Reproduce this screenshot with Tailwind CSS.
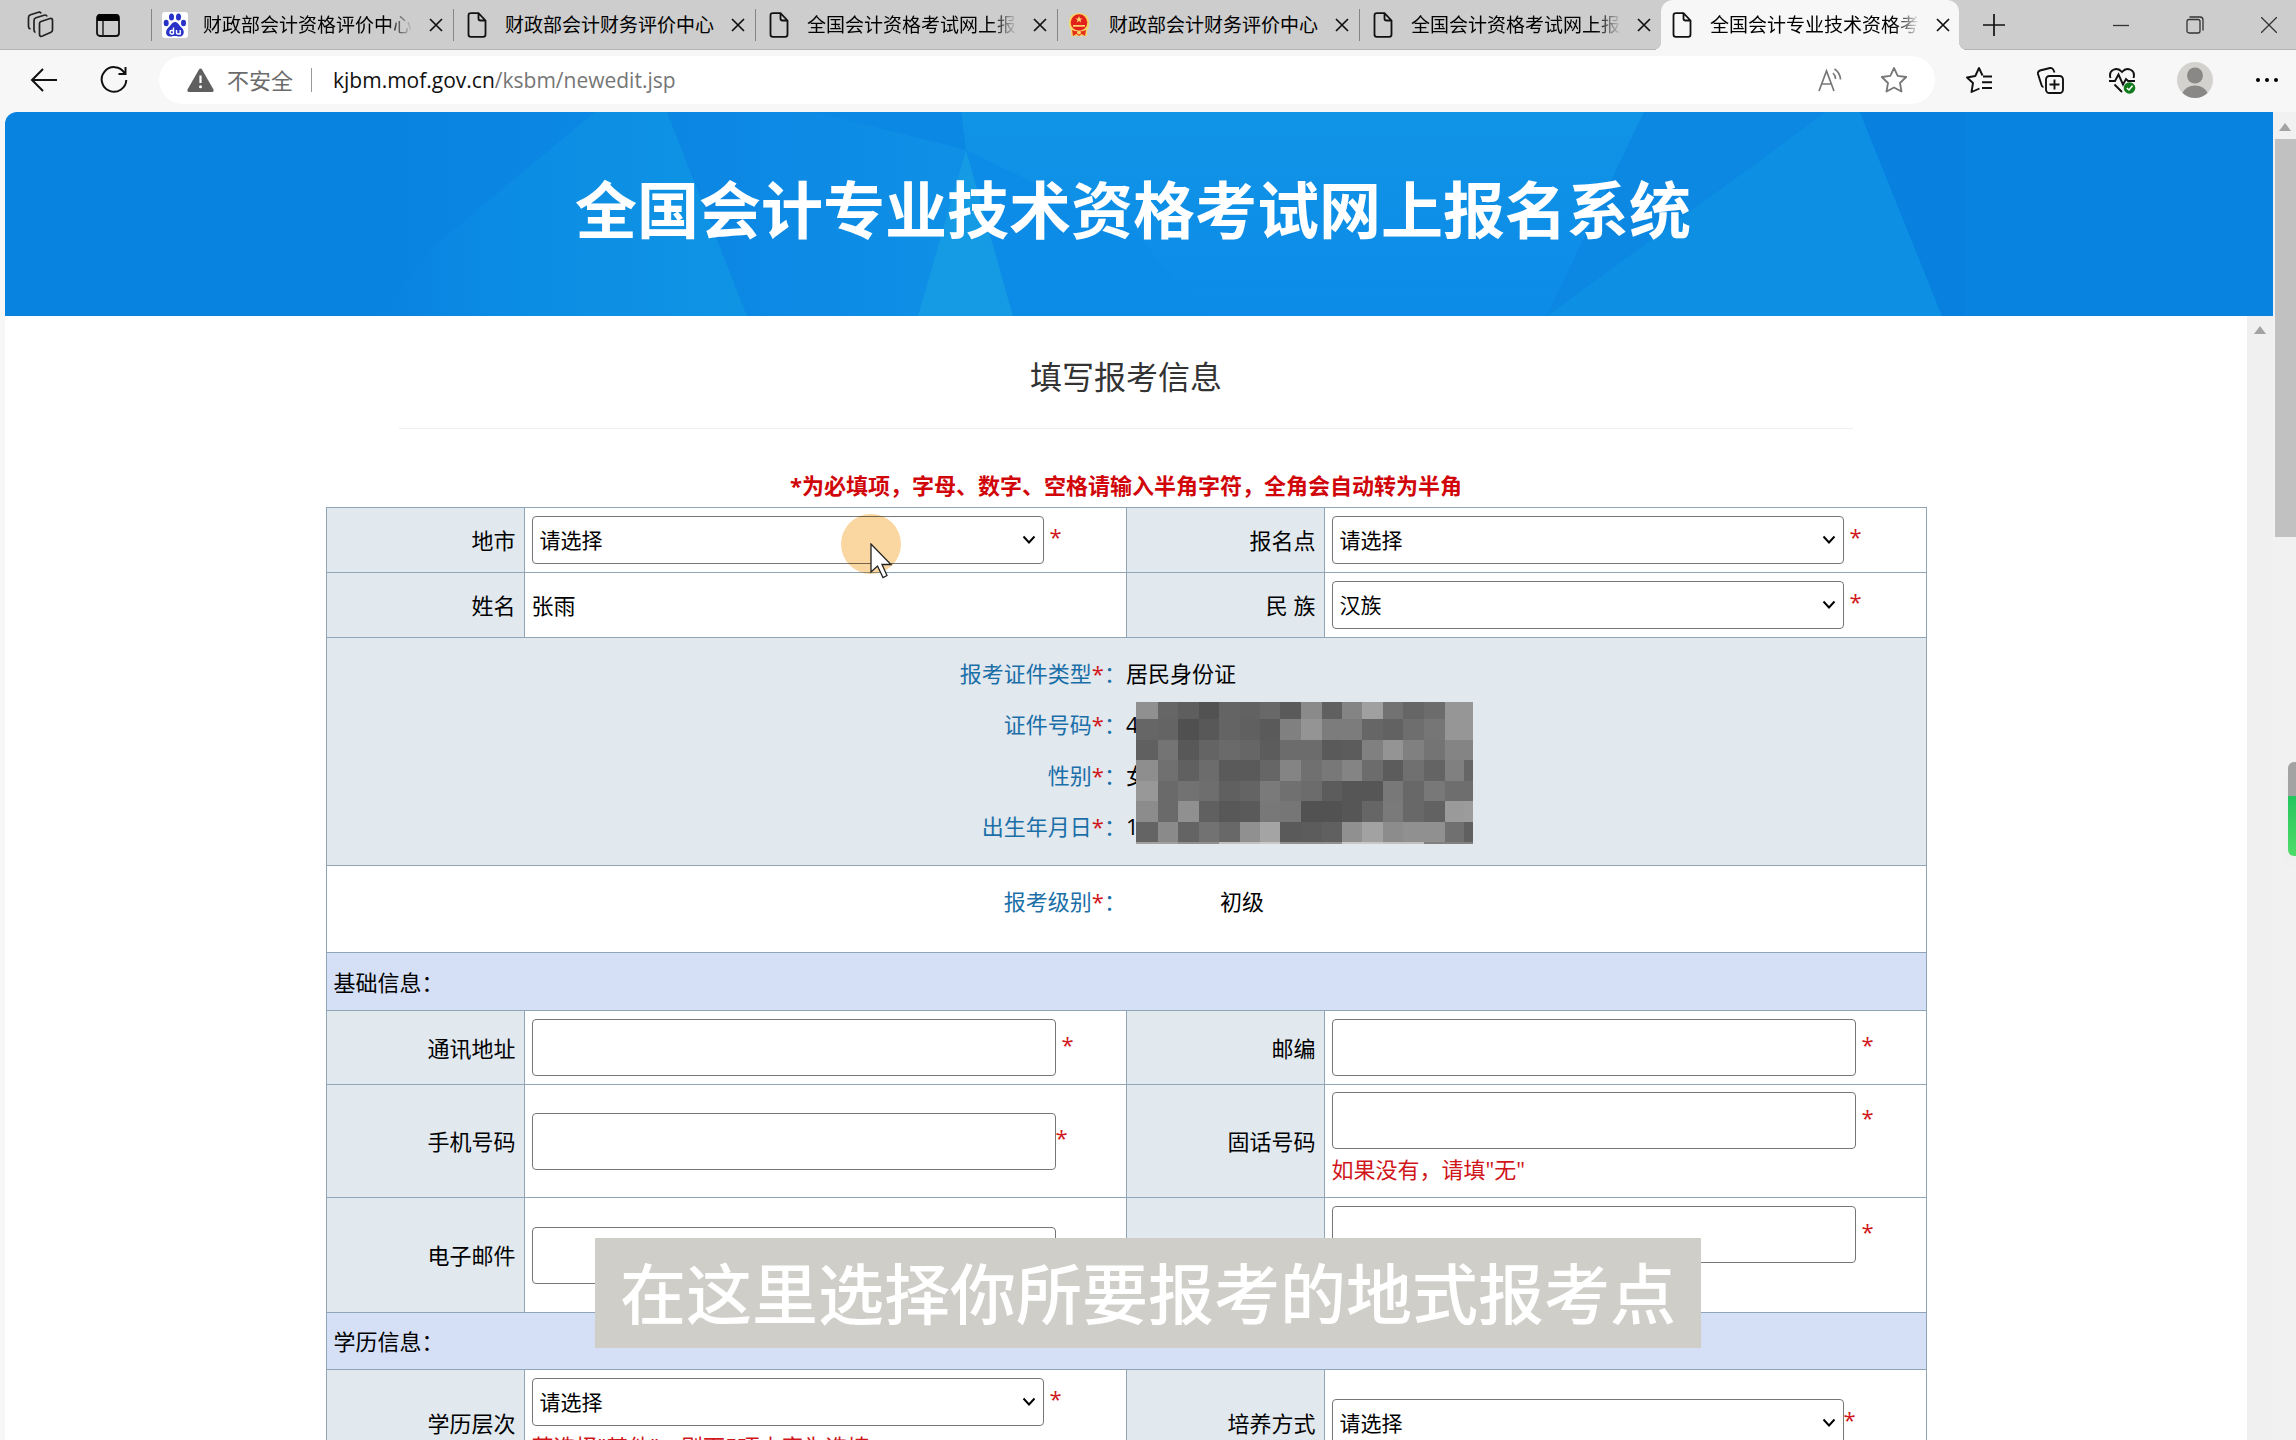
<!DOCTYPE html>
<html lang="zh-CN">
<head>
<meta charset="utf-8">
<title>全国会计专业技术资格考试网上报名系统</title>
<script src="https://cdn.jsdelivr.net/npm/@tailwindcss/browser@4"></script>
</head>
<body class="flex h-screen flex-col overflow-hidden bg-[#f7f7f7] font-['Open_Sans','Noto_Sans_CJK_SC',sans-serif] text-[22px] leading-8 text-black">
<svg class="hidden">
  <symbol id="page" viewBox="0 0 20 26"><path d="M3.500 1.200H11.500L18.500 8.500V22.500Q18.500 24.800 16.200 24.800H3.800Q1.500 24.800 1.500 22.500V3.500Q1.500 1.200 3.800 1.200M11.500 1.500V6.500Q11.500 8.500 13.500 8.500H18.300" fill="none" stroke="#111" stroke-width="1.800"/></symbol>
  <symbol id="close" viewBox="0 0 14 14"><path d="M1 1L13 13M13 1L1 13" fill="none" stroke="#111" stroke-width="1.700"/></symbol>
  <symbol id="chev" viewBox="0 0 14 10"><path d="M1.500 1.500L7 7.500L12.500 1.500" fill="none" stroke="#000" stroke-width="1.900"/></symbol>
</svg>

<header class="shrink-0">
  <nav class="flex h-[50px] border-b border-[#b4b4b4] bg-[#cdcdcd] text-[19px]" aria-label="标签页">
    <div class="flex w-[151px] shrink-0 items-center">
      <button class="ml-[27px]" aria-label="工作区"><svg class="h-[27px] w-[27px]" viewBox="0 0 27 27" fill="none" stroke="#222" stroke-width="1.700"><path d="M14 10.500L23 7.500Q25.500 7 25.500 9.500V19Q25.500 20.500 24 21.200L15.500 25Q12.500 26 12.500 23.500V12.500Q12.500 11 14 10.500ZM8.500 21.500Q7 21 7 19V9.500Q7 7.500 9 6.800L17 4.200Q19.500 3.500 20 5.500M3.500 18Q1.500 17.500 1.500 15.500V6.500Q1.500 4.500 3.500 3.800L11.500 1.200Q13.500 .8 14.200 2.500"/></svg></button>
      <button class="ml-[42px]" aria-label="标签操作"><svg class="h-6 w-6" viewBox="0 0 24 24"><rect x="1" y="2" width="22" height="21" rx="3" fill="none" stroke="#111" stroke-width="1.800"/><path d="M1 8V4Q1 1 4 1H20Q23 1 23 4V8Z" fill="#000"/><path d="M7 8V23" stroke="#222" stroke-width="1.500"/></svg></button>
    </div>
    <div class="flex w-[302px] items-center">
      <span class="h-8 w-px bg-[#858585]"></span>
      <svg class="ml-[10px] h-[26px] w-[26px] shrink-0" viewBox="0 0 26 26"><rect width="26" height="26" rx="3" fill="#fff"/><g fill="#2932c8"><ellipse cx="9.500" cy="5" rx="2.500" ry="3.500"/><ellipse cx="16.500" cy="5" rx="2.500" ry="3.500"/><ellipse cx="4.200" cy="11" rx="2.500" ry="3.300"/><ellipse cx="21.500" cy="11" rx="2.500" ry="3.300"/><path d="M13 10C16 10 17 13.500 20 16C23 19 22 24.500 18 24.500C15 24.500 15 24 13 24C11 24 10 24.500 8 24.500C3.500 24.500 3 19 6 16C9 13.500 10 10 13 10Z"/></g><path d="M11.500 15.500V22M11.500 18.500H9.500Q8 18.500 8 20.200T9.500 22H11.500M14.500 18V20.500Q14.500 22 16 22H18.200V18" fill="none" stroke="#fff" stroke-width="1.400"/></svg>
      <a href="#" class="ml-[15px] w-[210px] whitespace-nowrap [mask-image:linear-gradient(90deg,#000_88%,transparent)]">财政部会计资格评价中心</a>
      <button class="ml-4" aria-label="关闭标签页"><svg class="h-[14px] w-[14px]"><use href="#close"/></svg></button>
    </div>
    <div class="flex w-[302px] items-center">
      <span class="h-8 w-px bg-[#858585]"></span>
      <svg class="ml-[13px] h-[26px] w-5 shrink-0"><use href="#page"/></svg>
      <a href="#" class="ml-[18px] w-[210px] whitespace-nowrap">财政部会计财务评价中心</a>
      <button class="ml-4" aria-label="关闭标签页"><svg class="h-[14px] w-[14px]"><use href="#close"/></svg></button>
    </div>
    <div class="flex w-[302px] items-center">
      <span class="h-8 w-px bg-[#858585]"></span>
      <svg class="ml-[13px] h-[26px] w-5 shrink-0"><use href="#page"/></svg>
      <a href="#" class="ml-[18px] w-[210px] whitespace-nowrap [mask-image:linear-gradient(90deg,#000_88%,transparent)]">全国会计资格考试网上报</a>
      <button class="ml-4" aria-label="关闭标签页"><svg class="h-[14px] w-[14px]"><use href="#close"/></svg></button>
    </div>
    <div class="flex w-[302px] items-center">
      <span class="h-8 w-px bg-[#858585]"></span>
      <svg class="ml-[10px] h-[26px] w-[22px] shrink-0" viewBox="0 0 22 26"><path d="M1 11Q1 1 11 1T21 11Q21 16 19 18V24H3V18Q1 16 1 11Z" fill="#f8d568"/><circle cx="11" cy="10.500" r="8.300" fill="#e3201b"/><path d="M11 4L12 6.500H14.500L12.500 8L13.200 10.500L11 9L8.800 10.500L9.500 8L7.500 6.500H10ZM5 13H17V14.800H5Z" fill="#f8d568"/><path d="M4 18Q8 20 11 18.500Q14 20 18 18L17 24L13.500 22L11 24L8.500 22L5 24Z" fill="#e3301b"/><circle cx="11" cy="20.500" r="2" fill="#f8d568"/></svg>
      <a href="#" class="ml-[19px] w-[210px] whitespace-nowrap">财政部会计财务评价中心</a>
      <button class="ml-4" aria-label="关闭标签页"><svg class="h-[14px] w-[14px]"><use href="#close"/></svg></button>
    </div>
    <div class="flex w-[302px] items-center">
      <span class="h-8 w-px bg-[#858585]"></span>
      <svg class="ml-[13px] h-[26px] w-5 shrink-0"><use href="#page"/></svg>
      <a href="#" class="ml-[18px] w-[210px] whitespace-nowrap [mask-image:linear-gradient(90deg,#000_88%,transparent)]">全国会计资格考试网上报</a>
      <button class="ml-4" aria-label="关闭标签页"><svg class="h-[14px] w-[14px]"><use href="#close"/></svg></button>
    </div>
    <div class="relative -mb-px flex w-[298px] items-center rounded-t-xl bg-[#f7f7f7]">
      <span class="absolute -left-2 bottom-0 h-2 w-2 bg-[radial-gradient(circle_at_0_0,transparent_8px,#f7f7f7_8px)]"></span>
      <span class="absolute -right-2 bottom-0 h-2 w-2 bg-[radial-gradient(circle_at_100%_0,transparent_8px,#f7f7f7_8px)]"></span>
      <svg class="ml-[11px] h-[26px] w-5 shrink-0"><use href="#page"/></svg>
      <a href="#" class="ml-[18px] w-[210px] whitespace-nowrap [mask-image:linear-gradient(90deg,#000_88%,transparent)]">全国会计专业技术资格考</a>
      <button class="ml-4" aria-label="关闭标签页"><svg class="h-[14px] w-[14px]"><use href="#close"/></svg></button>
    </div>
    <button class="ml-6" aria-label="新建标签页"><svg class="h-[22px] w-[22px]" viewBox="0 0 22 22"><path d="M11 0V22M0 11H22" stroke="#111" stroke-width="1.700"/></svg></button>
    <div class="ml-auto flex gap-5">
      <button class="flex w-[54px] items-center justify-center" aria-label="最小化"><svg class="h-4 w-4" viewBox="0 0 16 16"><path d="M0 8.500H16" stroke="#333" stroke-width="1.300"/></svg></button>
      <button class="flex w-[54px] items-center justify-center" aria-label="还原"><svg class="h-[18px] w-[18px]" viewBox="0 0 18 18" fill="none" stroke="#333" stroke-width="1.300"><rect x="1" y="3.500" width="13" height="13.500" rx="2"/><path d="M3.500 1H14Q17 1 17 4V14.500"/></svg></button>
      <button class="flex w-[54px] items-center justify-center" aria-label="关闭"><svg class="h-4 w-4" viewBox="0 0 16 16"><path d="M0 0L16 16M16 0L0 16" stroke="#333" stroke-width="1.300"/></svg></button>
    </div>
  </nav>

  <div class="flex h-[62px] items-center pb-[2px] pl-[28px]">
    <button aria-label="返回"><svg class="h-8 w-8" viewBox="0 0 32 32" fill="none" stroke="#111" stroke-width="2"><path d="M29 16H4M15 5L4 16L15 27"/></svg></button>
    <button class="ml-[38px]" aria-label="刷新"><svg class="h-8 w-8" viewBox="0 0 32 32" fill="none" stroke="#111" stroke-width="2"><path d="M26.500 9A12.300 12.300 0 1 0 28.300 16M27.500 3V10H20.500"/></svg></button>
    <div class="ml-[29px] flex h-12 min-w-0 flex-1 items-center rounded-full bg-white">
      <svg class="ml-7 h-6 w-[27px] shrink-0" viewBox="0 0 27 24"><path d="M12 1.500Q13.500-.5 15 1.500L26.500 21.500Q27 24 25 24H2Q0 24 .5 21.500Z" fill="#5f5f5f"/><path d="M13.500 7.500V15" stroke="#fff" stroke-width="2.200"/><circle cx="13.500" cy="18.800" r="1.500" fill="#fff"/></svg>
      <span class="ml-[13px] whitespace-nowrap text-[#6b6b6b]">不安全</span>
      <span class="ml-[18px] h-6 w-px bg-[#999]"></span>
      <span class="ml-[21px] text-[21px] whitespace-nowrap text-[#767676]"><span class="text-[#111]">kjbm.mof.gov.cn</span>/ksbm/newedit.jsp</span>
      <button class="mr-[36px] ml-auto" aria-label="大声朗读"><svg class="h-7 w-7" viewBox="0 0 28 28" fill="none" stroke="#777" stroke-width="1.700"><path d="M3 25L10.500 5L18 25M5.500 18H15.500M17 7Q19.500 9.500 19.500 13M18.500 3Q24 6.500 24.500 13.500"/></svg></button>
      <button class="mr-[27px]" aria-label="收藏"><svg class="h-7 w-7" viewBox="0 0 28 28" fill="none" stroke="#777" stroke-width="1.800" stroke-linejoin="round"><path d="M14 2L17.700 9.800L26.200 11L20 17L21.500 25.500L14 21.500L6.500 25.500L8 17L1.800 11L10.300 9.800Z"/></svg></button>
    </div>
    <div class="ml-[15px] flex gap-[14px]">
      <button class="flex w-[58px] items-center justify-center" aria-label="收藏夹"><svg class="h-7 w-7" viewBox="0 0 28 28" fill="none" stroke="#111" stroke-width="1.900" stroke-linejoin="round"><path d="M14.500 22.500L6.500 26L8 17L2 11.500L10.300 10L14 2L17.500 9.500M18 10.500H27M17 16.200H27M17 22H27"/></svg></button>
      <button class="flex w-[58px] items-center justify-center" aria-label="集锦"><svg class="h-7 w-7" viewBox="0 0 28 28" fill="none" stroke="#111" stroke-width="1.900"><rect x="9" y="10" width="17" height="17" rx="3.500"/><path d="M17.500 13.500V23.500M12.500 18.500H22.500M6.500 21Q5 21 4.500 19L1 8Q.5 5.500 3 4.500L13 2Q15.500 1.500 16.500 4L17.500 6.500"/></svg></button>
      <button class="flex w-[58px] items-center justify-center" aria-label="浏览器概要"><svg class="h-7 w-7" viewBox="0 0 28 28" fill="none" stroke="#111" stroke-width="1.900"><path d="M1.500 12C-1 4 8 0 13 6C18 0 27 4 24.500 12M0 15H6L9.500 8.500L14 18.500L17 13L19 15H26M5.500 18.500L13 26"/><circle cx="20.500" cy="22" r="5.800" fill="#117a1c" stroke="none"/><path d="M17.800 22L20 24L23.500 19.800" stroke="#fff" stroke-width="1.500"/></svg></button>
      <button class="flex w-[58px] items-center justify-center" aria-label="用户"><svg class="h-9 w-9" viewBox="0 0 36 36"><circle cx="18" cy="18" r="18" fill="#d4d2cf"/><circle cx="18" cy="13.500" r="8" fill="#8a8886"/><path d="M5.500 31Q9 23.500 18 23.500T30.500 31Q25 36 18 36T5.500 31Z" fill="#8a8886"/></svg></button>
      <button class="flex w-[58px] items-center justify-center" aria-label="更多"><svg class="h-5 w-6" viewBox="0 0 24 20"><circle cx="3" cy="10" r="2"/><circle cx="12" cy="10" r="2"/><circle cx="21" cy="10" r="2"/></svg></button>
    </div>
  </div>
</header>

<div class="flex min-h-0 flex-1">
  <div class="ml-[5px] flex min-w-0 flex-1 flex-col overflow-hidden rounded-tl-xl bg-white">
    <div class="relative h-[204px] shrink-0 overflow-hidden bg-[#0983e0]">
      <svg class="absolute inset-0 h-full w-full" viewBox="0 0 2268 204" preserveAspectRatio="none">
        <defs>
          <linearGradient id="edge"><stop offset="0" stop-color="#0983e0"/><stop offset="1" stop-color="#0b88e4"/></linearGradient>
          <linearGradient id="fade"><stop offset="0" stop-color="#0983e0"/><stop offset=".4" stop-color="#0c8de4"/><stop offset="1" stop-color="#0f94e4"/></linearGradient>
          <linearGradient id="band"><stop offset="0" stop-color="#0b86e3"/><stop offset="1" stop-color="#0f90e6"/></linearGradient>
          <linearGradient id="mid" x2="0" y2="1"><stop offset="0" stop-color="#1094e6"/><stop offset="1" stop-color="#0d8be8"/></linearGradient>
        </defs>
        <path d="M370 0H600V204H370Z" fill="url(#edge)"/>
        <path d="M600 0H1639L1542 204H600Z" fill="#0b87e4"/>
        <path d="M590 0H662L742 204H375L430 133Z" fill="url(#fade)"/>
        <path d="M662 0H810L961 38L915 204H742Z" fill="url(#band)"/>
        <path d="M956 0H1639L1542 204H1008L961 38Z" fill="url(#mid)"/>
        <path d="M961 38L1130 120L1200 204H1008Z" fill="#0d8ce7"/>
        <path d="M961 38L1008 204H913Z" fill="#159ae4"/>
        <path d="M1639 0H1821L1542 204Z" fill="#0c88e3"/>
        <path d="M1821 0H1855L1937 204H1542Z" fill="#0d90e4"/>
        <path d="M1855 0H1960V204H1937Z" fill="#0780e0"/>
      </svg>
      <h1 class="relative pt-[54px] pr-3 text-center text-[62px] leading-[88px] font-bold whitespace-nowrap text-white">全国会计专业技术资格考试网上报名系统</h1>
    </div>

    <div class="flex min-h-0 flex-1">
      <main class="min-w-0 flex-1 overflow-hidden">
        <h2 class="mx-auto max-w-[1454px] border-b border-[#eee] pt-[37px] pb-[27px] text-center text-[32px] leading-[48px] text-[#333]">填写报考信息</h2>
        <p class="pt-[40px] pb-[6px] text-center font-bold text-[#d0060a]">*为必填项，字母、数字、空格请输入半角字符，全角会自动转为半角</p>
        <form>
        <table class="mx-auto w-full max-w-[1601px] table-fixed border-collapse [&_td]:border [&_td]:border-[#8fa5b5] [&_td]:px-[7px] [&_th]:border [&_th]:border-[#8fa5b5] [&_th]:bg-[#e1e8ee] [&_th]:px-2 [&_th]:text-right [&_th]:font-normal">
          <colgroup><col class="w-[198px]"><col><col class="w-[198px]"><col></colgroup>
          <tbody>
          <tr class="h-[65px]">
            <th><label for="city">地市</label></th>
            <td><div class="flex items-center gap-[6px]"><div class="relative w-[512px]"><select id="city" class="h-12 w-full appearance-none rounded-[4px] border border-[#767676] bg-white px-[7px] text-[21px]"><option>请选择</option></select><svg class="pointer-events-none absolute top-[19px] right-2 h-[10px] w-[14px]"><use href="#chev"/></svg></div><span class="pb-2 text-[#d0161a]">*</span></div></td>
            <th><label for="site">报名点</label></th>
            <td><div class="flex items-center gap-[6px]"><div class="relative w-[512px]"><select id="site" class="h-12 w-full appearance-none rounded-[4px] border border-[#767676] bg-white px-[7px] text-[21px]"><option>请选择</option></select><svg class="pointer-events-none absolute top-[19px] right-2 h-[10px] w-[14px]"><use href="#chev"/></svg></div><span class="pb-2 text-[#d0161a]">*</span></div></td>
          </tr>
          <tr class="h-[65px]">
            <th>姓名</th>
            <td>张雨</td>
            <th><label for="nation">民 族</label></th>
            <td><div class="flex items-center gap-[6px]"><div class="relative w-[512px]"><select id="nation" class="h-12 w-full appearance-none rounded-[4px] border border-[#767676] bg-white px-[7px] text-[21px]"><option>汉族</option></select><svg class="pointer-events-none absolute top-[19px] right-2 h-[10px] w-[14px]"><use href="#chev"/></svg></div><span class="pb-2 text-[#d0161a]">*</span></div></td>
          </tr>
          <tr class="h-[228px]">
            <td colspan="4" class="bg-[#e1e8ee] align-top">
              <div class="relative grid grid-cols-2 gap-y-[19px] pt-[19px]">
                <span class="text-right text-[#1b6fa8]">报考证件类型<span class="text-[#d0161a]">*</span>：</span><span>居民身份证</span>
                <span class="text-right text-[#1b6fa8]">证件号码<span class="text-[#d0161a]">*</span>：</span><span>4</span>
                <span class="text-right text-[#1b6fa8]">性别<span class="text-[#d0161a]">*</span>：</span><span>女</span>
                <span class="text-right text-[#1b6fa8]">出生年月日<span class="text-[#d0161a]">*</span>：</span><span>1</span>
                <svg id="mosaic" class="absolute top-[64px] left-1/2 ml-[10px] h-[142px] w-[337px]" viewBox="0 0 337 142" shape-rendering="crispEdges" aria-hidden="true"></svg>
              </div>
            </td>
          </tr>
          <tr class="h-[87px]">
            <td colspan="4" class="align-top">
              <div class="grid grid-cols-2 pt-[19px]">
                <span class="text-right text-[#1b6fa8]">报考级别<span class="text-[#d0161a]">*</span>：</span><span class="pl-[94px]">初级</span>
              </div>
            </td>
          </tr>
          <tr class="h-[58px]"><td colspan="4" class="bg-[#d5dff6]">基础信息：</td></tr>
          <tr class="h-[74px]">
            <th><label for="addr">通讯地址</label></th>
            <td><div class="flex items-center gap-[6px]"><input id="addr" class="h-[57px] w-[524px] rounded-[4px] border border-[#767676] bg-white px-2"><span class="pb-2 text-[#d0161a]">*</span></div></td>
            <th><label for="zip">邮编</label></th>
            <td><div class="flex items-center gap-[6px]"><input id="zip" class="h-[57px] w-[524px] rounded-[4px] border border-[#767676] bg-white px-2"><span class="pb-2 text-[#d0161a]">*</span></div></td>
          </tr>
          <tr class="h-[113px]">
            <th><label for="mobile">手机号码</label></th>
            <td><div class="flex items-center"><input id="mobile" class="h-[57px] w-[524px] rounded-[4px] border border-[#767676] bg-white px-2"><span class="pb-2 text-[#d0161a]">*</span></div></td>
            <th><label for="phone">固话号码</label></th>
            <td class="pt-[7px] align-top"><div class="flex items-center gap-[6px]"><input id="phone" class="h-[57px] w-[524px] rounded-[4px] border border-[#767676] bg-white px-2"><span class="pb-2 text-[#d0161a]">*</span></div><p class="pt-1 text-[#d0161a]">如果没有，请填"无"</p></td>
          </tr>
          <tr class="h-[115px]">
            <th><label for="mail">电子邮件</label></th>
            <td><div class="flex items-center gap-[6px]"><input id="mail" class="h-[57px] w-[524px] rounded-[4px] border border-[#767676] bg-white px-2"></div></td>
            <th></th>
            <td class="pt-[8px] align-top"><div class="flex items-center gap-[6px]"><input aria-label="其他联系方式" class="h-[57px] w-[524px] rounded-[4px] border border-[#767676] bg-white px-2"><span class="pb-2 text-[#d0161a]">*</span></div></td>
          </tr>
          <tr class="h-[57px]"><td colspan="4" class="bg-[#d5dff6]">学历信息：</td></tr>
          <tr class="h-[107px]">
            <th><label for="edu">学历层次</label></th>
            <td class="pt-[8px] align-top"><div class="flex items-center gap-[6px]"><div class="relative w-[512px]"><select id="edu" class="h-12 w-full appearance-none rounded-[4px] border border-[#767676] bg-white px-[7px] text-[21px]"><option>请选择</option></select><svg class="pointer-events-none absolute top-[19px] right-2 h-[10px] w-[14px]"><use href="#chev"/></svg></div><span class="pb-2 text-[#d0161a]">*</span></div><p class="pt-1 text-[#d0161a]">若选择"其他"，则下5项内容为选填</p></td>
            <th><label for="mode">培养方式</label></th>
            <td><div class="flex items-center"><div class="relative w-[512px]"><select id="mode" class="h-12 w-full appearance-none rounded-[4px] border border-[#767676] bg-white px-[7px] text-[21px]"><option>请选择</option></select><svg class="pointer-events-none absolute top-[19px] right-2 h-[10px] w-[14px]"><use href="#chev"/></svg></div><span class="pb-2 text-[#d0161a]">*</span></div></td>
          </tr>
          </tbody>
        </table>
        </form>
      </main>
      <div class="flex w-[26px] shrink-0 justify-center bg-[#f0f0f0] pt-[10px]"><svg class="h-[8px] w-3" viewBox="0 0 12 8"><path d="M0 8L6 0L12 8Z" fill="#a3a3a3"/></svg></div>
    </div>
  </div>
  <div class="flex w-[23px] shrink-0 flex-col items-center bg-[#f1f1f1]">
    <svg class="mt-[11px] h-[8px] w-3" viewBox="0 0 12 8"><path d="M0 8L6 0L12 8Z" fill="#a3a3a3"/></svg>
    <div class="mt-[8px] ml-[2px] h-[30%] w-[21px] bg-[#c1c1c1]"></div>
  </div>
</div>

<!-- recording widget on the screen edge -->
<div class="fixed top-[762px] right-0 flex h-[94px] w-2 flex-col overflow-hidden rounded-l-md shadow-lg">
  <span class="h-[34px] bg-[#a3a3a3]"></span><span class="flex-1 bg-gradient-to-b from-[#22c55e] to-[#4fdc6a]"></span>
</div>

<!-- pointer with click highlight -->
<div class="pointer-events-none fixed top-[514px] left-[841px] h-[60px] w-[60px] rounded-full bg-[#fad7a0] mix-blend-multiply"></div>
<svg class="pointer-events-none fixed top-[543px] left-[870px] h-[36px] w-[23px]" viewBox="0 0 23 36"><path d="M1 1V29L7.500 23L13 34.500L17 32.500L12 21.500H21Z" fill="#fff" stroke="#222" stroke-width="1.300"/></svg>

<!-- subtitle -->
<div class="fixed bottom-[92px] left-1/2 -translate-x-1/2 bg-[#cfcec8] px-[25px] text-[66px] leading-[110px] font-medium whitespace-nowrap text-white">在这里选择你所要报考的地式报考点</div>

<script>
// grey cells that hide the personal data, one hex pair per cell
const rows = [
  '90665e526462685a8a6084a072666c9696',
  '6664505864605a80947c7c66626e769696',
  '607458646a665c6c6c5a5c809480748484',
  '8e70606c5a5a66847078846c5c70648066',
  '986a726e60647a706c5c565678687 86e6e',
  '8c6a9060585a78765252566 67a68629a9c',
  '648a64726890a45a5c6090a28c90907060',
  'a0a09090c0c0c8909090c8c8c0c0808080'
].map(r => r.replace(/ /g, '').match(/../g));
const xs = [0,22,42,63,83,104,124,144,165,186,206,226,247,267,288,309,328,337];
const ys = [0,17,38,58,79,99,120,140,142];
let cells = '';
rows.forEach((r, y) => r.forEach((g, x) => {
  cells += `<rect x="${xs[x]}" y="${ys[y]}" width="${xs[x+1]-xs[x]}" height="${ys[y+1]-ys[y]}" fill="#${g}${g}${g}"/>`;
}));
document.getElementById('mosaic').innerHTML = cells;
</script>
</body>
</html>
